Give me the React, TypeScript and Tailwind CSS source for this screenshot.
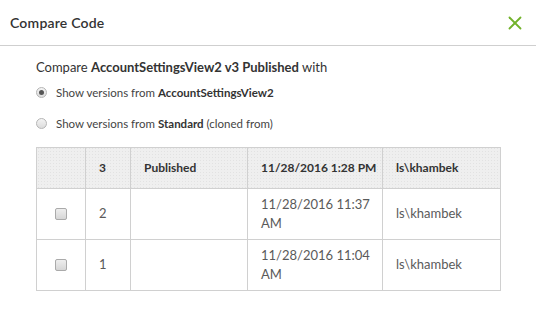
import { X } from "lucide-react";

const rows = [
  { version: "2", date: "11/28/2016 11:37 AM", user: "ls\\khambek" },
  { version: "1", date: "11/28/2016 11:04 AM", user: "ls\\khambek" },
];

const Radio = ({ checked }: { checked?: boolean }) => (
  <span className="w-[11px] h-[11px] rounded-full border border-[#b5b5b5] bg-gradient-to-b from-[#f4f4f4] to-[#dcdcdc] flex items-center justify-center shrink-0">
    {checked && <span className="w-[5px] h-[5px] rounded-full bg-[#555]" />}
  </span>
);

export default function App() {
  const dotted = "bg-[#efefef] bg-[radial-gradient(#e2e2e2_0.6px,transparent_0.7px)] bg-[length:3px_3px]";
  return (
    <div className="w-[536px] h-[316px] bg-white font-['Lato','Liberation_Sans',sans-serif] text-[#333]">
      <div className="h-[46px] flex items-center justify-between pl-[10px] pr-[10px] border-b border-[#cfcfcf]">
        <span className="text-[14px] font-semibold tracking-[0.2px] text-[#333]">Compare Code</span>
        <X className="w-[22px] h-[22px] text-[#72b22b]" strokeWidth={2} />
      </div>
      <div className="pl-[36px] pr-[36px] pt-[13px]">
        <div className="text-[13px] leading-[16px]">
          Compare <b>AccountSettingsView2 v3 Published</b> with
        </div>
        <div className="flex items-center gap-[9px] mt-[9px] text-[11.5px] text-[#444]">
          <Radio checked />
          <span>
            Show versions from <b className="text-[#333]">AccountSettingsView2</b>
          </span>
        </div>
        <div className="flex items-center gap-[9px] mt-[14px] text-[11.5px] text-[#444]">
          <Radio />
          <span>
            Show versions from <b className="text-[#333]">Standard</b> (cloned from)
          </span>
        </div>
        <table className="mt-[14px] border-collapse border border-[#d0d0d0] w-[464px] table-fixed">
          <colgroup>
            <col className="w-[49px]" />
            <col className="w-[45px]" />
            <col className="w-[117px]" />
            <col className="w-[135px]" />
            <col className="w-[118px]" />
          </colgroup>
          <thead>
            <tr className={`h-[41px] ${dotted}`}>
              <th className="border border-[#d0d0d0]" />
              <th className="border border-[#d0d0d0] text-left pl-[13px] text-[12px] font-bold text-[#333]">3</th>
              <th className="border border-[#d0d0d0] text-left pl-[13px] text-[12px] font-bold text-[#333]">Published</th>
              <th className="border border-[#d0d0d0] text-left pl-[13px] text-[12px] font-bold text-[#333]">11/28/2016 1:28 PM</th>
              <th className="border border-[#d0d0d0] text-left pl-[13px] text-[12px] font-bold text-[#333]">ls\khambek</th>
            </tr>
          </thead>
          <tbody>
            {rows.map((r) => (
              <tr key={r.version} className="h-[51px] text-[13px] text-[#5a5a5a]">
                <td className="border border-[#d0d0d0] text-center">
                  <span className="inline-block align-middle w-[12px] h-[12px] rounded-[2px] border border-[#aaa] bg-gradient-to-b from-[#eee] to-[#d6d6d6]" />
                </td>
                <td className="border border-[#d0d0d0] pl-[13px]">{r.version}</td>
                <td className="border border-[#d0d0d0]" />
                <td className="border border-[#d0d0d0] pl-[13px] pr-[2px] leading-[19px]">{r.date}</td>
                <td className="border border-[#d0d0d0] pl-[13px]">{r.user}</td>
              </tr>
            ))}
          </tbody>
        </table>
      </div>
    </div>
  );
}
